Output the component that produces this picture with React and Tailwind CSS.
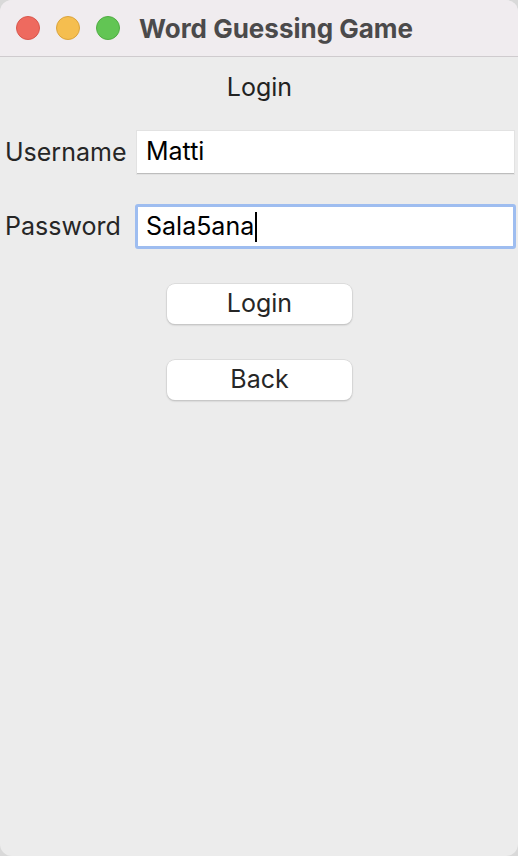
export default function App() {
  return (
    <div className="w-[518px] h-[856px] bg-[#d9d9d9]" style={{ fontFamily: 'Inter, "Noto Sans", sans-serif' }}>
      <div className="w-full h-full bg-[#ececec] rounded-[12px] overflow-hidden flex flex-col">
        {/* Title bar */}
        <div className="h-[57px] shrink-0 bg-[#f0ecef] border-b border-[#cfcbce] flex items-center pl-[16px]">
          <div className="flex items-center gap-[16px]">
            <span className="w-[24px] h-[24px] rounded-full bg-[#ee6a5f] border border-[#d9574d]"></span>
            <span className="w-[24px] h-[24px] rounded-full bg-[#f5be4f] border border-[#dba43c]"></span>
            <span className="w-[24px] h-[24px] rounded-full bg-[#62c554] border border-[#50ad43]"></span>
          </div>
          <span className="ml-[19px] text-[26px] font-bold text-[#4b4a4b]">Word Guessing Game</span>
        </div>

        {/* Content */}
        <div className="flex flex-col">
          <div className="text-center text-[25px] text-[#222] mt-[13px] leading-[34px] pl-[1px]">Login</div>

          <div className="flex items-center mt-[27px] pl-[5px] pr-[4px]">
            <span className="w-[132px] text-[25px] text-[#262626]">Username</span>
            <div className="flex-1 h-[43px] bg-white border-b border-[#bdbdbd] shadow-[0_0_0_1px_#e2e2e2] flex items-center px-[9px] text-[25px] text-black">
              Matti
            </div>
          </div>

          <div className="flex items-center mt-[30px] pl-[5px] pr-[2px]">
            <span className="w-[130px] text-[25px] text-[#262626]">Password</span>
            <div className="flex-1 h-[45px] bg-white border-[3px] border-[#9ebdf0] rounded-[3px] flex items-center px-[8px] text-[25px] text-black">
              Sala5ana<span className="inline-block w-[2px] h-[30px] bg-black ml-[1px]"></span>
            </div>
          </div>

          <div className="flex flex-col items-center gap-[36px] mt-[35px] pl-[1px]">
            <button className="w-[185px] h-[40px] bg-white rounded-[8px] shadow-[0_0_0_0.5px_#cfcfcf,0_1px_2px_rgba(0,0,0,0.25)] text-[25px] text-[#262626]">
              Login
            </button>
            <button className="w-[185px] h-[40px] bg-white rounded-[8px] shadow-[0_0_0_0.5px_#cfcfcf,0_1px_2px_rgba(0,0,0,0.25)] text-[25px] text-[#262626]">
              Back
            </button>
          </div>
        </div>
      </div>
    </div>
  );
}
